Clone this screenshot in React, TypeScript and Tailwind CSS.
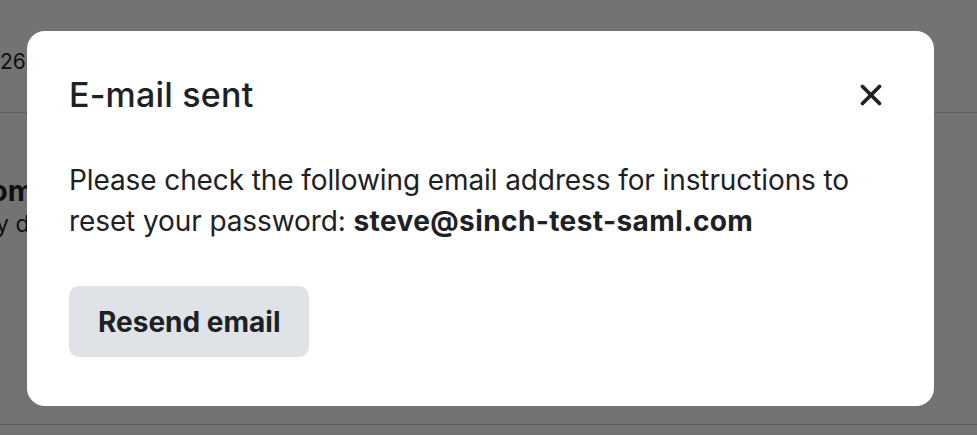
import React from 'react';
import { X } from 'lucide-react';

const font = { fontFamily: 'Inter, "Noto Sans", sans-serif' };

const BackgroundPage = () => (
  <div className="h-screen w-full overflow-hidden bg-white text-[#1f2328]" style={font}>
    <div className="h-[113px] border-b border-[#d3d3d3] flex items-start">
      <span className="mt-[49px] text-[21px] leading-[26px]">26</span>
    </div>
    <div className="h-[312px] border-b border-[#cfcfcf] pt-[61px] -ml-[10px]">
      <div className="text-[29px] font-bold leading-[34px]">om</div>
      <div className="text-[23px] leading-[28px] mt-[2px] ml-[6px]">y d</div>
    </div>
  </div>
);

const EmailSentModal = () => (
  <div className="fixed inset-0 bg-black/55 pl-[27px] pt-[31px]">
    <div className="w-[907px] h-[375px] bg-white rounded-[18px] px-[42px] pt-[44px] text-[#1d2125]" style={font}>
      <div className="flex items-center justify-between">
        <h2 className="text-[34px] leading-[40px] font-medium tracking-[0.2px]">E-mail sent</h2>
        <button className="mr-[4px] text-[#1d2125]">
          <X size={34} strokeWidth={2.6} />
        </button>
      </div>
      <p className="mt-[45px] text-[28px] leading-[41px] tracking-[-0.1px]">
        Please check the following email address for instructions to reset your password:{' '}
        <strong className="font-bold tracking-[0.4px]">steve@sinch-test-saml.com</strong>
      </p>
      <button className="mt-[44px] h-[71px] px-[29px] rounded-[10px] bg-[#dfe3e7] text-[28px] font-bold">
        Resend email
      </button>
    </div>
  </div>
);

export default function App() {
  return (
    <div className="relative">
      <BackgroundPage />
      <EmailSentModal />
    </div>
  );
}
